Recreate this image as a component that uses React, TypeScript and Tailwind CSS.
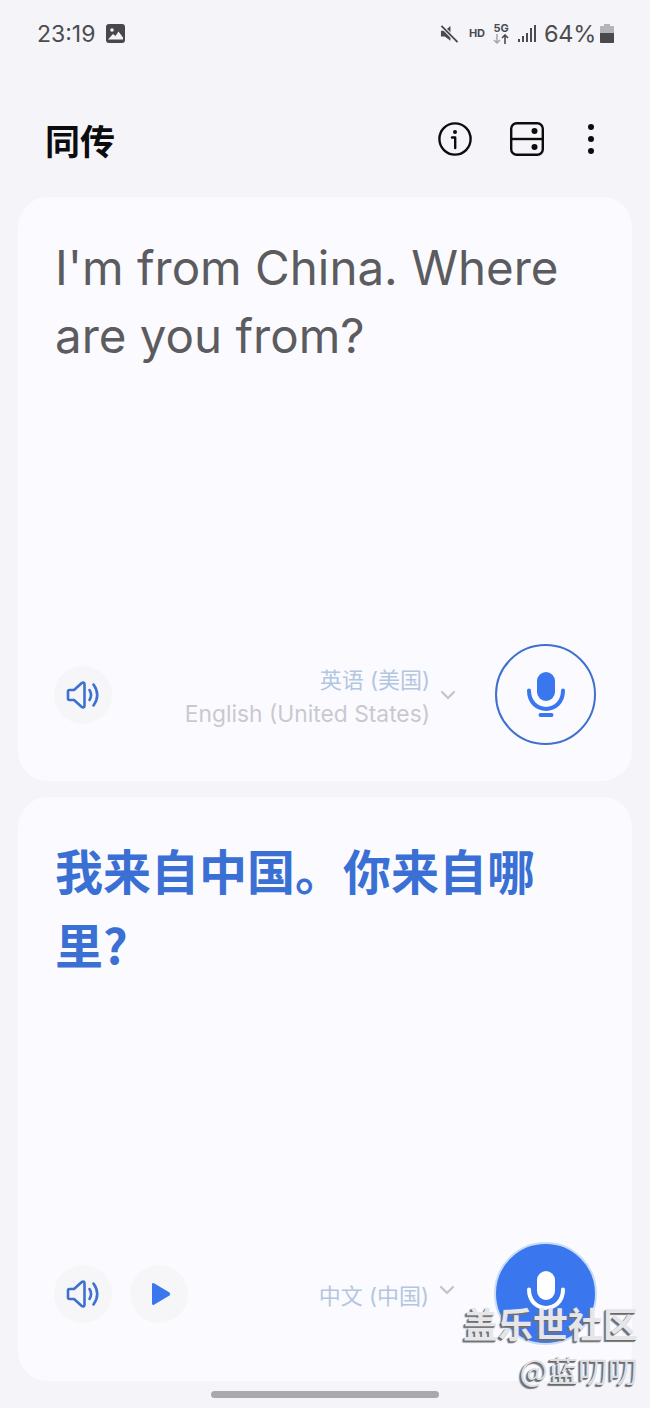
const sans = "font-['Inter','Noto_Sans_CJK_SC',sans-serif]";

function Speaker() {
  return (
    <svg width="34" height="30" viewBox="0 0 34 30" fill="none" stroke="#3f70cf" strokeWidth="2.6" strokeLinecap="round" strokeLinejoin="round">
      <path d="M2 11.5 Q2 10 3.5 10 H8 L15.5 3.2 Q18.5 1.6 18.5 4.5 V25.5 Q18.5 28.4 15.5 26.8 L8 20 H3.5 Q2 20 2 18.5 Z" />
      <path d="M23.5 10 Q26.6 15 23.5 20" />
      <path d="M27.5 4.5 Q35 15 27.5 25.5" />
    </svg>
  );
}

function RoundButton({ children }: { children: React.ReactNode }) {
  return <div className="flex h-[58px] w-[58px] items-center justify-center rounded-full bg-[#f6f6f9]">{children}</div>;
}

function Chevron() {
  return (
    <svg width="16" height="10" viewBox="0 0 16 10" fill="none" stroke="#c4c6cf" strokeWidth="2.4" strokeLinecap="round" strokeLinejoin="round">
      <path d="M2 2 L8 8 L14 2" />
    </svg>
  );
}

function Mic({ color, base }: { color: string; base: boolean }) {
  return (
    <svg width="38" height="46" viewBox="0 0 38 46" fill="none">
      <rect x="10" y="0" width="18" height="29" rx="9" fill={color} />
      <path d="M2 18.5 C2 43 36 43 36 18.5" stroke={color} strokeWidth="4" strokeLinecap="round" />
      {base && <rect x="11.5" y="41" width="15" height="4" rx="2" fill={color} />}
    </svg>
  );
}

export default function App() {
  return (
    <div className={`relative flex h-[1408px] w-[650px] flex-col overflow-hidden bg-[#f5f5f9] ${sans}`}>
      {/* status bar */}
      <div className="flex h-[67px] items-center justify-between pl-[37px] pr-[36px]">
        <div className="flex items-center gap-[10px]">
          <span className="translate-y-[1px] text-[23px] leading-none text-[#4c4c4f]">23:19</span>
          <svg width="19" height="19" viewBox="0 0 19 19" className="translate-x-[1px]">
            <rect width="19" height="19" rx="3" fill="#48484b" />
            <circle cx="6" cy="6" r="1.8" fill="#f5f5f9" />
            <path d="M2 15.5 L7 10 L9.5 12 L12.5 7.5 L17 13.5 V15.5 Z" fill="#f5f5f9" />
          </svg>
        </div>
        <div className="flex items-center">
          <svg width="19" height="20" viewBox="0 0 20 20" className="mr-[10px]">
            <path d="M1 6.5 H5 L11 1.5 V17 L5 12.5 H1 Z" fill="#4a4a4d" />
            <path d="M1.5 1.5 L18.5 18.5" stroke="#f5f5f9" strokeWidth="4" />
            <path d="M1.5 1.5 L18.5 18.5" stroke="#4a4a4d" strokeWidth="2" />
          </svg>
          <span className="mr-[8px] text-[11px] leading-none font-bold text-[#4c4c4f]">HD</span>
          <div className="mr-[9px] flex flex-col items-center">
            <span className="text-[11px] leading-[11px] font-bold text-[#4c4c4f]">5G</span>
            <svg width="16" height="10" viewBox="0 0 16 10" fill="none" strokeWidth="1.6">
              <path d="M4 0 V9 M1 6 L4 9 L7 6" stroke="#aaaaad" />
              <path d="M12 10 V1 M9 4 L12 1 L15 4" stroke="#4c4c4f" />
            </svg>
          </div>
          <svg width="18" height="19" viewBox="0 0 18 19" className="mr-[8px]" fill="#4c4c4f">
            <rect x="0" y="15" width="2" height="3" />
            <rect x="4" y="12" width="2" height="6" />
            <rect x="8" y="9" width="2" height="9" />
            <rect x="12" y="4" width="2" height="14" />
            <rect x="16" y="1" width="2" height="17" />
          </svg>
          <span className="mr-[4px] text-[23.5px] leading-none tracking-[-0.3px] text-[#4c4c4f]">64%</span>
          <svg width="14" height="19" viewBox="0 0 14 19">
            <path d="M4 0 H10 V2 H13 Q14 2 14 3 V18 Q14 19 13 19 H1 Q0 19 0 18 V3 Q0 2 1 2 H4 Z" fill="#b5b5b8" />
            <path d="M0 9 H14 V18 Q14 19 13 19 H1 Q0 19 0 18 Z" fill="#4a4a4d" />
          </svg>
        </div>
      </div>

      {/* header */}
      <div className="flex h-[130px] items-start justify-between pl-[45px] pr-[56px] pt-[50px]">
        <span className="font-['Noto_Sans_CJK_SC',sans-serif] text-[35px] leading-[46px] font-bold text-[#0c0c0e]">同传</span>
        <div className="flex items-center pt-[5px]">
          <svg width="34" height="34" viewBox="0 0 34 34" fill="none" stroke="#0c0c0e" strokeWidth="2.4" className="mr-[38px]">
            <circle cx="17" cy="17" r="15.6" />
            <circle cx="17" cy="10" r="2" fill="#0c0c0e" stroke="none" />
            <path d="M14 15.5 H17.2 V26" strokeLinecap="round" strokeLinejoin="round" />
          </svg>
          <svg width="34" height="34" viewBox="0 0 34 34" fill="none" stroke="#0c0c0e" strokeWidth="2.4" className="mr-[44px]">
            <rect x="1.2" y="1.2" width="31.6" height="31.6" rx="5.5" />
            <path d="M1.2 17 H32.8" />
            <circle cx="24.5" cy="9" r="3" fill="#0c0c0e" stroke="none" />
            <circle cx="24.5" cy="25" r="3" fill="#0c0c0e" stroke="none" />
          </svg>
          <div className="flex flex-col gap-[6px]">
            <div className="h-[6px] w-[6px] rounded-full bg-[#0c0c0e]" />
            <div className="h-[6px] w-[6px] rounded-full bg-[#0c0c0e]" />
            <div className="h-[6px] w-[6px] rounded-full bg-[#0c0c0e]" />
          </div>
        </div>
      </div>

      {/* top card */}
      <div className="mx-[18px] flex h-[584px] flex-col justify-between rounded-[30px] bg-[#fbfbff] pb-[36px] pl-[36px] pr-[36px] pt-[37px]">
        <p className="pl-[1px] text-[47.5px] leading-[68px] text-[#5c5c60]">I'm from China. Where are you from?</p>
        <div className="flex items-center justify-between">
          <RoundButton><Speaker /></RoundButton>
          <div className="flex items-center">
            <div className="flex flex-col items-end pt-[5px]">
              <span className="text-[22px] leading-[33px] text-[#b3c6e0]">英语 (美国)</span>
              <span className="text-[22.8px] leading-[33px] text-[#c9c9cf]">English (United States)</span>
            </div>
            <div className="ml-[10px] mr-[39px]"><Chevron /></div>
            <div className="flex h-[101px] w-[101px] items-center justify-center rounded-full border-[2px] border-[#3f70cf]">
              <Mic color="#3a76ee" base />
            </div>
          </div>
        </div>
      </div>

      {/* bottom card */}
      <div className="mx-[18px] mt-[16px] flex h-[584px] flex-col justify-between rounded-[30px] bg-[#fbfbff] pb-[36px] pl-[36px] pr-[35px] pt-[35px]">
        <p className="w-[500px] pl-[1px] font-['Noto_Sans_CJK_SC',sans-serif] text-[48px] leading-[74px] font-semibold text-[#3a6fd4]">我来自中国。你来自哪里?</p>
        <div className="flex items-center justify-between">
          <div className="flex items-center gap-[18px] pt-[1px]">
            <RoundButton><Speaker /></RoundButton>
            <RoundButton>
              <svg width="20" height="24" viewBox="0 0 20 24" className="ml-[3px]">
                <path d="M1 2.5 Q1 0.5 3 1.2 L18.5 10.6 Q20 12 18.5 13.4 L3 22.8 Q1 23.5 1 21.5 Z" fill="#3a76ee" />
              </svg>
            </RoundButton>
          </div>
          <div className="flex items-center">
            <span className="pt-[5px] text-[22px] leading-[33px] text-[#b3c6e0]">中文 (中国)</span>
            <div className="ml-[10px] mr-[39px] -translate-y-[4px]"><Chevron /></div>
            <div className="flex h-[103px] w-[103px] items-center justify-center rounded-full border-[2px] border-[#c9dcf8] bg-[#3a76ee]">
              <Mic color="#ffffff" base={false} />
            </div>
          </div>
        </div>
      </div>

      {/* home indicator */}
      <div className="mx-auto mt-[10px] h-[7px] w-[228px] rounded-full bg-[#a9a9ab]" />

      {/* watermark */}
      <div className="absolute right-[12px] top-[1303px] flex flex-col items-end font-['Noto_Sans_CJK_SC',sans-serif] text-[#e6e6e8] [text-shadow:-1px_1px_0_#6a6a6c,-2px_2px_1px_#77777a]">
        <span className="text-[35px] leading-[40px] font-bold">盖乐世社区</span>
        <span className="mt-[8px] text-[30px] leading-[36px] text-[#dedee0]">@蓝叨叨</span>
      </div>
    </div>
  );
}
